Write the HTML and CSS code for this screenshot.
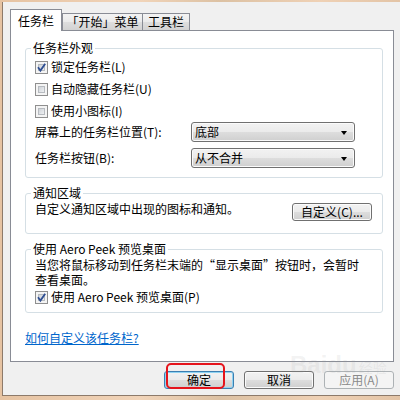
FILE: index.html
```html
<!DOCTYPE html>
<html lang="zh-CN">
<head>
<meta charset="utf-8">
<link rel="stylesheet" href="styles.css">
</head>
<body>
<div class="window">
  <div class="tabs">
    <div class="tab active">任务栏</div>
    <div class="tab t2">「开始」菜单</div>
    <div class="tab t3">工具栏</div>
  </div>
  <div class="panel">
    <fieldset class="group g1">
      <legend>任务栏外观</legend>
      <div class="cbrow"><span class="cb checked"><svg class="mark" width="13" height="13" viewBox="0 0 13 13"><path d="M3 6.3 L5.4 9.6 L10.2 2.8" fill="none" stroke="#2f4f93" stroke-width="1.8"/></svg></span><span>锁定任务栏(L)</span></div>
      <div class="cbrow"><span class="cb"></span><span>自动隐藏任务栏(U)</span></div>
      <div class="cbrow"><span class="cb"></span><span>使用小图标(I)</span></div>
      <div class="selrow"><span>屏幕上的任务栏位置(T):</span><div class="select">底部</div></div>
      <div class="selrow second"><span>任务栏按钮(B):</span><div class="select">从不合并</div></div>
    </fieldset>
    <fieldset class="group g2">
      <legend>通知区域</legend>
      <div class="notifyrow"><span>自定义通知区域中出现的图标和通知。</span><button class="btn custom">自定义(C)...</button></div>
    </fieldset>
    <fieldset class="group g3">
      <legend>使用 Aero Peek 预览桌面</legend>
      <p class="desc">当您将鼠标移动到任务栏末端的“显示桌面”按钮时，会暂时<br>查看桌面。</p>
      <div class="cbrow short"><span class="cb checked"><svg class="mark" width="13" height="13" viewBox="0 0 13 13"><path d="M3 6.3 L5.4 9.6 L10.2 2.8" fill="none" stroke="#2f4f93" stroke-width="1.8"/></svg></span><span>使用 Aero Peek 预览桌面(P)</span></div>
    </fieldset>
    <a class="link" href="#">如何自定义该任务栏?</a>
  </div>
  <div class="footer">
    <button class="btn default">确定</button>
    <button class="btn">取消</button>
    <button class="btn disabled">应用(A)</button>
  </div>
</div>
<div class="annot"></div>
<div class="watermark"><span class="wm-big">Baidu</span><span class="wm-cn">经验</span></div>
</body>
</html>
```
FILE: styles.css
```css
html, body {
  margin: 0;
  padding: 0;
}
body {
  width: 400px;
  height: 400px;
  overflow: hidden;
  position: relative;
  background: linear-gradient(to right, #e6c3a2, #f1d4b9 35%, #dcc1a3 55%, #efd1b5 80%, #e3c4a6);
  font-family: "Noto Sans CJK SC", "Noto Sans", sans-serif;
  font-size: 12px;
  line-height: 14px;
  color: #000;
}
.window {
  margin: 2px 0 0 2px;
  width: 398px;
  height: 394px;
  box-sizing: border-box;
  background: #f0f0f0;
  border-left: 1px solid #8d7a6a;
  border-bottom: 1px solid #8d7a6a;
  padding: 7px 6px 0 7px;
}
.tabs {
  display: flex;
  align-items: flex-end;
  height: 21px;
}
.tab {
  box-sizing: border-box;
  height: 17px;
  border: 1px solid #898c95;
  border-bottom: none;
  background: linear-gradient(#f3f3f3, #ebebeb 48%, #dedede 52%, #d2d2d2);
  text-align: center;
  padding-top: 1px;
  line-height: 14px;
  white-space: nowrap;
}
.tab.active {
  width: 52px;
  height: 22px;
  margin-bottom: -1px;
  background: #fff;
  padding-top: 4px;
  position: relative;
  z-index: 1;
}
.t2 { width: 81px; }
.t3 { width: 48px; margin-left: -1px; }
.panel {
  box-sizing: border-box;
  height: 332px;
  border: 1px solid #898c95;
  background: #fff;
  padding: 10px 10px 0 14px;
}
.group {
  margin: 0;
  min-width: 0;
  border: 1px solid #d5dfe5;
  border-radius: 3px;
}
.group legend {
  padding: 0 2px;
  margin-left: -4px;
  line-height: 14px;
}
.g1 { padding: 1px 9px 9px 9px; }
.g2 { margin-top: 8px; padding: 2px 10px 12px 9px; }
.g3 { margin-top: 8px; padding: 1px 9px 5px 9px; }
.cbrow {
  display: flex;
  align-items: center;
  gap: 3px;
  height: 22px;
  white-space: nowrap;
}
.cbrow.short {
  height: 20px;
}
.cb {
  position: relative;
  flex: none;
  width: 13px;
  height: 13px;
  box-sizing: border-box;
  border: 1px solid #8f8f8f;
  background: #f4f4f4;
  padding: 2px;
}
.cb::before {
  content: "";
  display: block;
  width: 7px;
  height: 7px;
  box-sizing: border-box;
  border: 1px solid #b7bbc0;
  background: linear-gradient(135deg, #cfd3d8, #eef0f2);
}
.cb .mark {
  position: absolute;
  left: -1px;
  top: -1px;
}
.selrow {
  display: grid;
  grid-template-columns: 156px 164px;
  align-items: center;
  height: 20px;
  white-space: nowrap;
}
.selrow.second { margin-top: 6px; }
.select {
  position: relative;
  box-sizing: border-box;
  height: 20px;
  border: 1px solid #707070;
  border-radius: 3px;
  background: linear-gradient(#f2f2f2, #ebebeb 48%, #dddddd 52%, #cfcfcf);
  box-shadow: inset 0 0 0 1px #fbfbfb;
  padding-left: 3px;
  line-height: 18px;
}
.select::after {
  content: "";
  position: absolute;
  right: 7px;
  top: 8px;
  border-top: 4px solid #000;
  border-left: 3.5px solid transparent;
  border-right: 3.5px solid transparent;
}
.notifyrow {
  display: flex;
  justify-content: space-between;
  align-items: flex-start;
  white-space: nowrap;
}
.btn {
  box-sizing: border-box;
  height: 18px;
  width: 70px;
  padding: 0;
  border: 1px solid #707070;
  border-radius: 3px;
  background: linear-gradient(#f2f2f2, #ebebeb 48%, #dddddd 52%, #cfcfcf);
  box-shadow: inset 0 0 0 1px #fbfbfb;
  font: inherit;
  line-height: 16px;
  color: #000;
  text-align: center;
  white-space: nowrap;
}
.btn.custom {
  width: 80px;
  margin-top: 1px;
}
.btn.default {
  border-color: #3c7fb1;
  box-shadow: inset 0 0 0 1px #8fd3f2;
}
.btn.disabled {
  border-color: #adb2b5;
  background: #f4f4f4;
  box-shadow: none;
  color: #8a8a8a;
}
.desc {
  margin: 0;
  line-height: 15px;
  white-space: nowrap;
}
.link {
  display: inline-block;
  margin-top: 18px;
  color: #0066cc;
  text-decoration: underline;
  line-height: 14px;
}
.footer {
  display: flex;
  justify-content: flex-end;
  gap: 10px;
  margin-top: 9px;
}
.annot {
  position: absolute;
  left: 166px;
  top: 363px;
  width: 59px;
  height: 26px;
  box-sizing: border-box;
  border: 2px solid #e5141c;
  border-radius: 5px;
}
.watermark {
  position: absolute;
  left: 290px;
  top: 352px;
  color: rgba(160, 160, 160, 0.14);
  pointer-events: none;
  white-space: nowrap;
}
.wm-big {
  font-family: "Liberation Sans", sans-serif;
  font-weight: bold;
  font-size: 24px;
  line-height: 26px;
}
.wm-cn {
  font-size: 14px;
  margin-left: 2px;
}
```
